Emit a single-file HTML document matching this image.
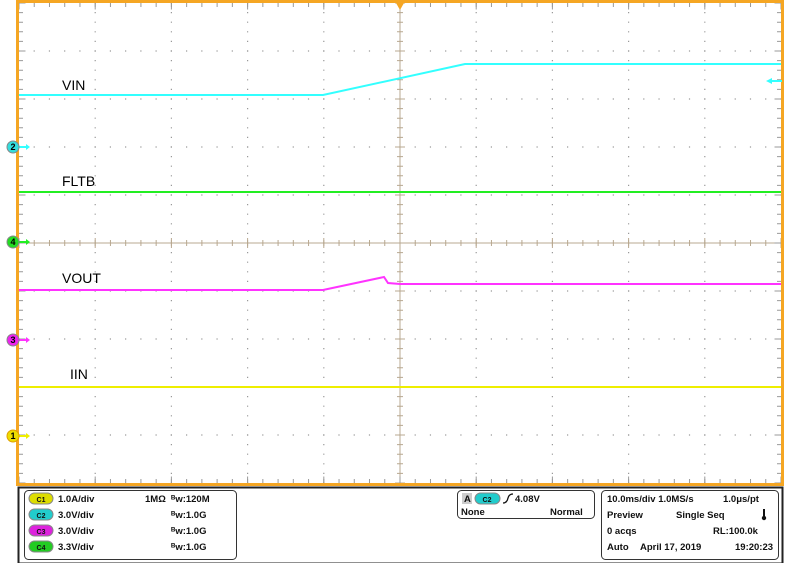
<!DOCTYPE html>
<html><head><meta charset="utf-8"><style>
html,body{margin:0;padding:0;background:#fff;width:795px;height:563px;overflow:hidden}
svg{display:block}
text{font-family:"Liberation Sans",Arial,sans-serif}
</style></head><body>
<svg width="795" height="563" viewBox="0 0 795 563" xmlns="http://www.w3.org/2000/svg">
<rect width="795" height="563" fill="#fff"/>
<!-- grid dots: vertical lines -->
<g stroke="#999" stroke-width="1.2" stroke-dasharray="1.2 8.4" stroke-dashoffset="-9">
<line x1="95.2" y1="3" x2="95.2" y2="483"/>
<line x1="171.4" y1="3" x2="171.4" y2="483"/>
<line x1="247.6" y1="3" x2="247.6" y2="483"/>
<line x1="323.8" y1="3" x2="323.8" y2="483"/>
<line x1="476.2" y1="3" x2="476.2" y2="483"/>
<line x1="552.4" y1="3" x2="552.4" y2="483"/>
<line x1="628.6" y1="3" x2="628.6" y2="483"/>
<line x1="704.8" y1="3" x2="704.8" y2="483"/>
</g>
<g stroke="#999" stroke-width="1.2" stroke-dasharray="1.2 14.04" stroke-dashoffset="-14.6">
<line x1="19" y1="51" x2="781" y2="51"/>
<line x1="19" y1="99" x2="781" y2="99"/>
<line x1="19" y1="147" x2="781" y2="147"/>
<line x1="19" y1="195" x2="781" y2="195"/>
<line x1="19" y1="291" x2="781" y2="291"/>
<line x1="19" y1="339" x2="781" y2="339"/>
<line x1="19" y1="387" x2="781" y2="387"/>
<line x1="19" y1="435" x2="781" y2="435"/>
</g>
<!-- center cross -->
<line x1="400" y1="3" x2="400" y2="483" stroke="#b8a890" stroke-width="1"/>
<line x1="19" y1="243" x2="781" y2="243" stroke="#b8a890" stroke-width="1"/>
<g stroke="#b8a890">
<line x1="19" y1="243" x2="781" y2="243" stroke-width="6" stroke-dasharray="1 14.24" stroke-dashoffset="-14.74"/>
<line x1="19" y1="243" x2="781" y2="243" stroke-width="10" stroke-dasharray="1 75.2" stroke-dashoffset="-75.7"/>
<line x1="400" y1="3" x2="400" y2="483" stroke-width="6" stroke-dasharray="1 8.6" stroke-dashoffset="-9.1"/>
<line x1="400" y1="3" x2="400" y2="483" stroke-width="10" stroke-dasharray="1 47" stroke-dashoffset="-47.5"/>
</g>
<!-- edge ticks -->
<g stroke="#999">
<line x1="19" y1="5" x2="781" y2="5" stroke-width="4" stroke-dasharray="1 14.24" stroke-dashoffset="-14.74"/>
<line x1="19" y1="6" x2="781" y2="6" stroke-width="7" stroke-dasharray="1 75.2" stroke-dashoffset="-75.7"/>
<line x1="19" y1="481" x2="781" y2="481" stroke-width="4" stroke-dasharray="1 14.24" stroke-dashoffset="-14.74"/>
<line x1="19" y1="480" x2="781" y2="480" stroke-width="7" stroke-dasharray="1 75.2" stroke-dashoffset="-75.7"/>
<line x1="21" y1="3" x2="21" y2="483" stroke-width="4" stroke-dasharray="1 8.6" stroke-dashoffset="-9.1"/>
<line x1="22" y1="3" x2="22" y2="483" stroke-width="7" stroke-dasharray="1 47" stroke-dashoffset="-47.5"/>
<line x1="779" y1="3" x2="779" y2="483" stroke-width="4" stroke-dasharray="1 8.6" stroke-dashoffset="-9.1"/>
<line x1="778" y1="3" x2="778" y2="483" stroke-width="7" stroke-dasharray="1 47" stroke-dashoffset="-47.5"/>
</g>
<!-- plot frame -->
<rect x="17.5" y="1.5" width="765" height="483" fill="none" stroke="#f5a623" stroke-width="3"/>
<polygon points="396,3 404,3 400,10" fill="#f5a623"/>
<!-- traces -->
<polyline points="19,95 323,95 465,64 781,64" fill="none" stroke="#33ffff" stroke-width="2"/>
<line x1="19" y1="192" x2="781" y2="192" stroke="#22ee22" stroke-width="2"/>
<polyline points="19,290 323,290 384,277 388,283 400,284 781,284" fill="none" stroke="#ff33ff" stroke-width="2"/>
<line x1="19" y1="387" x2="781" y2="387" stroke="#eeee00" stroke-width="2"/>
<polygon points="766,81 772,78 772,84" fill="#33ffff"/><line x1="771" y1="81" x2="782" y2="81" stroke="#33ffff" stroke-width="2"/>
<g font-size="14" fill="#000">
<text x="62" y="90">VIN</text>
<text x="62" y="186">FLTB</text>
<text x="62" y="283">VOUT</text>
<text x="70" y="379">IIN</text>
</g>
<g font-size="9" font-weight="bold" text-anchor="middle">
<line x1="18" y1="147" x2="27" y2="147" stroke="#33ffff" stroke-width="2"/><polygon points="26,144 30,147 26,150" fill="#33ffff"/>
<circle cx="13" cy="147" r="6" fill="#33dddd" stroke="#888" stroke-width="1"/><text x="13" y="150">2</text>
<line x1="18" y1="242" x2="27" y2="242" stroke="#22ee22" stroke-width="2"/><polygon points="26,239 30,242 26,245" fill="#22ee22"/>
<circle cx="13" cy="242" r="6" fill="#22dd22" stroke="#888" stroke-width="1"/><text x="13" y="245">4</text>
<line x1="18" y1="340" x2="27" y2="340" stroke="#ff33ff" stroke-width="2"/><polygon points="26,337 30,340 26,343" fill="#ff33ff"/>
<circle cx="13" cy="340" r="6" fill="#ee22ee" stroke="#888" stroke-width="1"/><text x="13" y="343">3</text>
<line x1="18" y1="436" x2="27" y2="436" stroke="#eeee00" stroke-width="2"/><polygon points="26,433 30,436 26,439" fill="#eeee00"/>
<circle cx="13" cy="436" r="6" fill="#eedd00" stroke="#e0a000" stroke-width="1"/><text x="13" y="439">1</text>
</g>
<!-- bottom panel -->
<rect x="18.5" y="487.5" width="764" height="76" fill="#fff" stroke="#222" stroke-width="2"/>
<rect x="24.5" y="490.5" width="212" height="69" rx="4" fill="#fff" stroke="#333"/>
<rect x="457.5" y="490.5" width="137" height="28" rx="4" fill="#fff" stroke="#333"/>
<rect x="601.5" y="490.5" width="177" height="69" rx="4" fill="#fff" stroke="#333"/>
<g font-size="9.5" font-weight="bold" fill="#111">
<rect x="29" y="493" width="24" height="11" rx="5.5" fill="#dddd00" stroke="#888"/><text x="41" y="502" font-size="7" text-anchor="middle">C1</text>
<rect x="29" y="509" width="24" height="11" rx="5.5" fill="#22cccc" stroke="#888"/><text x="41" y="518" font-size="7" text-anchor="middle">C2</text>
<rect x="29" y="525" width="24" height="11" rx="5.5" fill="#dd22dd" stroke="#888"/><text x="41" y="534" font-size="7" text-anchor="middle">C3</text>
<rect x="29" y="541" width="24" height="11" rx="5.5" fill="#22cc22" stroke="#888"/><text x="41" y="550" font-size="7" text-anchor="middle">C4</text>
<text x="58" y="502">1.0A/div</text>
<text x="58" y="518">3.0V/div</text>
<text x="58" y="534">3.0V/div</text>
<text x="58" y="550">3.3V/div</text>
<text x="145" y="502">1MΩ</text>
<text x="171" y="502">ᴮw:120M</text>
<text x="171" y="518">ᴮw:1.0G</text>
<text x="171" y="534">ᴮw:1.0G</text>
<text x="171" y="550">ᴮw:1.0G</text>
<rect x="462" y="493" width="10" height="11" fill="#ccc"/><text x="464" y="502">A</text>
<rect x="475" y="493" width="25" height="11" rx="5.5" fill="#22cccc" stroke="#888"/><text x="487" y="502" font-size="7" text-anchor="middle">C2</text>
<path d="M503 503 Q507 503 508 498 Q509 494 513 494" fill="none" stroke="#111" stroke-width="1.3"/>
<text x="515" y="502">4.08V</text>
<text x="461" y="515">None</text>
<text x="550" y="515">Normal</text>
<text x="607" y="502">10.0ms/div 1.0MS/s</text>
<text x="723" y="502">1.0μs/pt</text>
<text x="607" y="518">Preview</text>
<text x="676" y="518">Single Seq</text>
<rect x="763" y="509" width="2" height="9" fill="#111"/><circle cx="764" cy="518" r="2.2" fill="#111"/>
<text x="607" y="534">0 acqs</text>
<text x="713" y="534">RL:100.0k</text>
<text x="607" y="550">Auto</text>
<text x="640" y="550">April 17, 2019</text>
<text x="735" y="550">19:20:23</text>
</g>
</svg>
</body></html>
